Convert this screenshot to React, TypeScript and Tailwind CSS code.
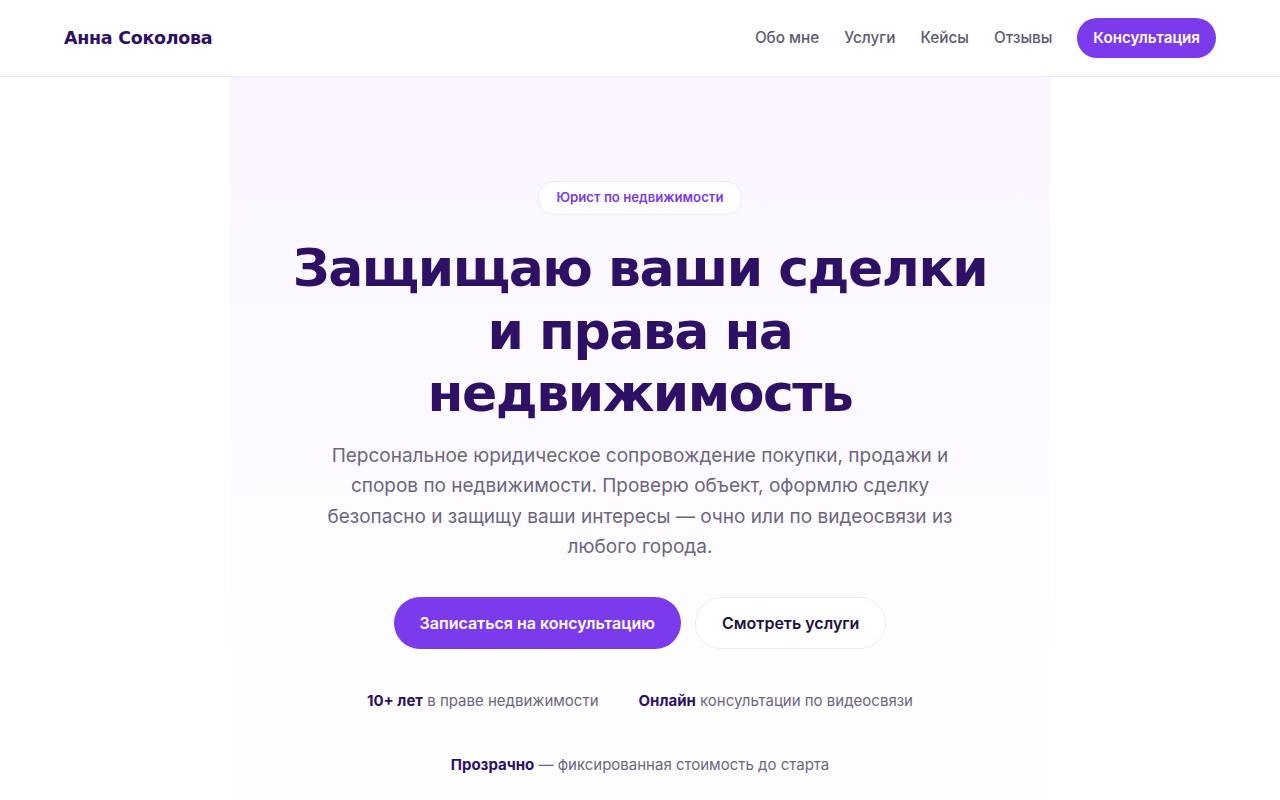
import React from "react";

const heading = { fontFamily: '"DejaVu Sans", "Noto Sans", sans-serif' };
const body = { fontFamily: 'Inter, "Noto Sans", sans-serif' };

export default function App() {
  return (
    <div className="min-h-screen bg-white" style={body}>
      <header className="h-[77px] border-b border-[#efeafb] bg-white">
        <div className="flex h-full items-center justify-between px-16">
          <div className="text-[17.5px] font-bold tracking-[-0.3px] text-[#2e1065]" style={heading}>
            Анна Соколова
          </div>
          <nav className="flex items-center gap-[25px]">
            <a className="text-[15.3px] font-medium text-[#5e5a72]">Обо мне</a>
            <a className="text-[15.3px] font-medium text-[#5e5a72]">Услуги</a>
            <a className="text-[15.3px] font-medium text-[#5e5a72]">Кейсы</a>
            <a className="text-[15.3px] font-medium text-[#5e5a72]">Отзывы</a>
            <a className="flex h-10 items-center rounded-full bg-[#7c3aed] px-4 text-[15.2px] font-semibold text-white">
              Консультация
            </a>
          </nav>
        </div>
      </header>
      <main className="flex justify-center">
        <section className="flex w-[820px] flex-col items-center bg-gradient-to-b from-[#faf4ff] via-[#fdfbff] to-white pb-20 pt-[104px]">
          <span className="flex h-[34px] items-center rounded-full border border-[#eee9fb] bg-white px-[17px] text-[13.2px] font-semibold text-[#7c3aed]">
            Юрист по недвижимости
          </span>
          <h1
            className="mt-[22px] max-w-[760px] text-center text-[52px] font-bold leading-[62.5px] tracking-[-1.5px] text-[#2e1065]"
            style={heading}
          >
            Защищаю ваши сделки
            <br />и права на
            <br />
            недвижимость
          </h1>
          <p className="mt-[16px] max-w-[630px] text-center text-[19px] leading-[30.5px] text-[#6b6680]">
            Персональное юридическое сопровождение покупки, продажи и споров по недвижимости. Проверю объект, оформлю сделку безопасно и защищу ваши интересы — очно или по видеосвязи из любого города.
          </p>
          <div className="mt-[34px] flex gap-[14px]">
            <a className="flex h-[52px] items-center rounded-full bg-[#7c3aed] px-[26px] text-[16px] font-semibold text-white">
              Записаться на консультацию
            </a>
            <a className="flex h-[52px] items-center rounded-full border border-[#eeebf5] bg-white px-[26px] text-[16px] font-semibold text-[#1e1240]">
              Смотреть услуги
            </a>
          </div>
          <div className="mt-[40px] flex max-w-[580px] flex-wrap justify-center gap-x-10 gap-y-[40px] text-[15px] leading-[24px] text-[#6b6680]">
            <div>
              <b className="font-bold text-[#2e1065]">10+ лет</b> в праве недвижимости
            </div>
            <div>
              <b className="font-bold text-[#2e1065]">Онлайн</b> консультации по видеосвязи
            </div>
            <div>
              <b className="font-bold text-[#2e1065]">Прозрачно</b> — фиксированная стоимость до старта
            </div>
          </div>
        </section>
      </main>
    </div>
  );
}
